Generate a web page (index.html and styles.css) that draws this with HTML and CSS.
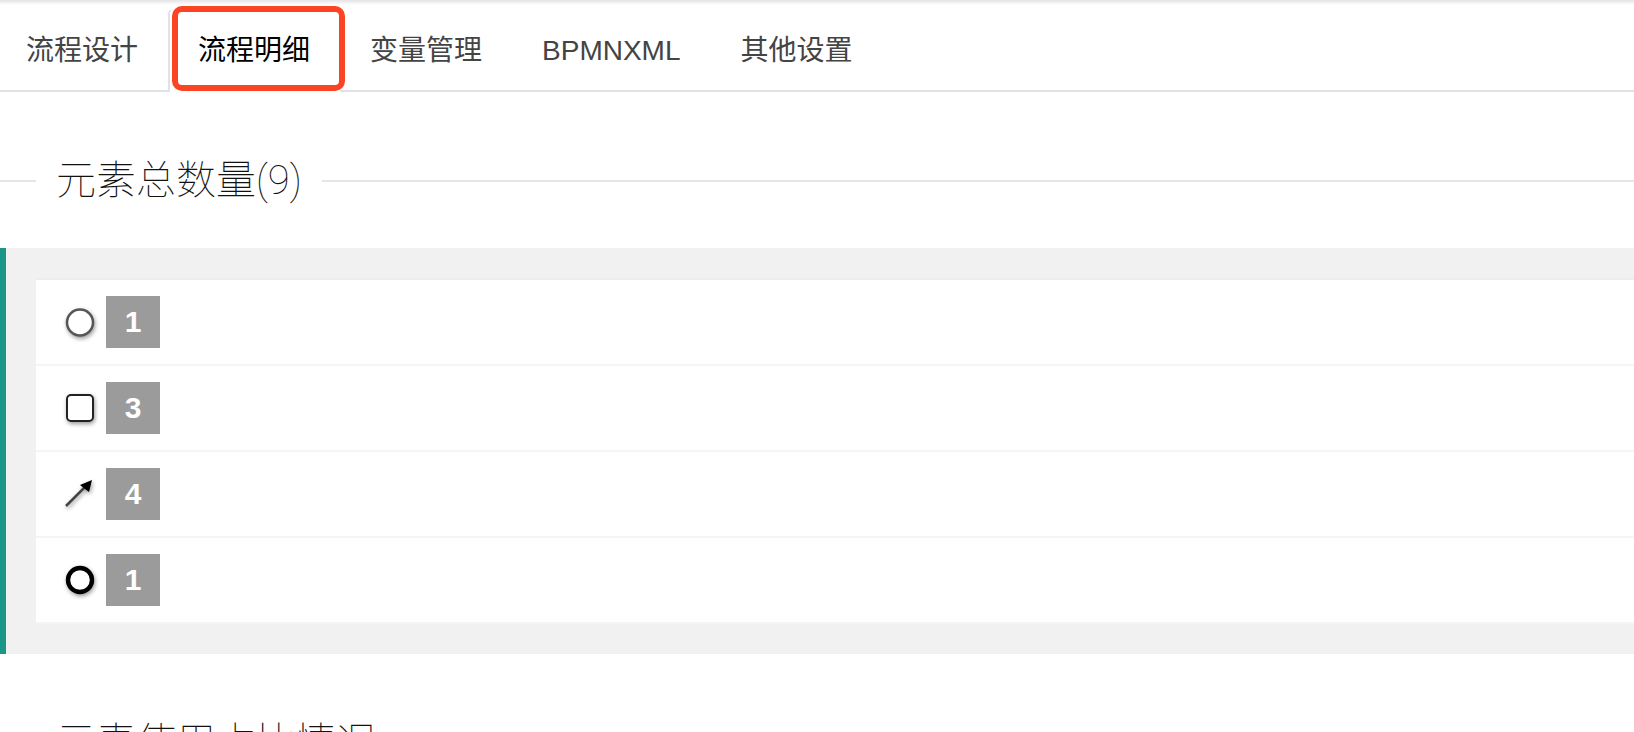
FILE: index.html
```html
<!DOCTYPE html>
<html lang="zh-CN">
<head>
  <meta charset="UTF-8" />
  <meta name="viewport" content="width=device-width, initial-scale=1.0"/>
  <title>流程明细</title>
  <link rel="stylesheet" href="styles.css">
</head>
<body>
  <nav class="tab-title">
    <a href="#design">流程设计</a>
    <a href="#detail" class="tab-this">流程明细</a>
    <a href="#variable">变量管理</a>
    <a href="#xml">BPMNXML</a>
    <a href="#setting">其他设置</a>
  </nav>

  <main>
    <h2 class="field-title"><span>元素总数量(9)</span></h2>

    <div class="quote">
      <ul class="element-list">
        <li>
          <svg class="icon" viewBox="0 0 32 32">
            <circle cx="14" cy="14.5" r="13" fill="#fff" stroke="#555" stroke-width="2.5"/>
          </svg>
          <span class="badge">1</span>
        </li>
        <li>
          <svg class="icon" viewBox="0 0 32 32">
            <rect x="1" y="1" width="26" height="26" rx="4" fill="#fff" stroke="#222" stroke-width="2"/>
          </svg>
          <span class="badge">3</span>
        </li>
        <li>
          <svg class="icon" viewBox="0 0 32 32">
            <path d="M0 26 L19 7" fill="none" stroke="#444" stroke-width="2.5"/>
            <path d="M26 0 L23 12 L19 9 L14 5 Z" fill="#000"/>
          </svg>
          <span class="badge">4</span>
        </li>
        <li>
          <svg class="icon" viewBox="0 0 32 32">
            <circle cx="14" cy="14" r="12" fill="#fff" stroke="#000" stroke-width="4.4"/>
          </svg>
          <span class="badge">1</span>
        </li>
      </ul>
    </div>

    <h2 class="field-title"><span>元素使用占比情况</span></h2>
  </main>
</body>
</html>
```
FILE: styles.css
```css
* { box-sizing: border-box; }
body {
  margin: 0;
  background: #fff;
  color: #333;
  font-family: "Liberation Sans", "Noto Sans CJK SC", sans-serif;
  font-size: 28px;
}

/* tabs */
.tab-title {
  display: flex;
  height: 92px;
  padding-top: 10px;
  margin-left: -4px;
  border-bottom: 2px solid #e2e2e2;
  background: linear-gradient(#e4e4e4, #fff 5px);
}
.tab-title a {
  padding: 0 30px;
  line-height: 82px;
  color: #444;
  text-decoration: none;
  white-space: nowrap;
}
.tab-title .tab-this {
  position: relative;
  height: 82px;
  color: #000;
  background: #fff;
  box-shadow: inset 2px 0 #e2e2e2;
  border-radius: 4px 4px 0 0;
}
.tab-this::after {
  content: "";
  position: absolute;
  top: -4px;
  right: -5px;
  bottom: 1px;
  left: 4px;
  border: 6px solid #fb4424;
  border-radius: 10px;
}

/* section title with a line through it */
.field-title {
  display: flex;
  align-items: center;
  margin: 60px 0 38px;
  color: #111;
  font-family: Roboto, "Noto Sans CJK SC", sans-serif;
  font-size: 40px;
  font-weight: 100;
  line-height: 58px;
}
.field-title::before,
.field-title::after {
  content: "";
  height: 2px;
  background: #e6e6e6;
}
.field-title::before { width: 36px; }
.field-title::after { flex: 1; }
.field-title span { padding: 0 20px; }

/* element counts */
.quote {
  padding: 30px 0 30px 30px;
  border-left: 6px solid #1a9688;
  background: #f1f1f1;
}
.element-list {
  margin: 0;
  padding: 0;
  list-style: none;
  border-top: 2px solid #ededed;
  background: #fff;
}
.element-list li {
  display: flex;
  align-items: center;
  gap: 8px;
  padding: 16px 30px;
  border-bottom: 2px solid #f5f5f5;
}
.icon {
  width: 32px;
  height: 32px;
  margin-top: 4px;
  overflow: visible;
  filter: drop-shadow(1px 2px 2px rgba(0, 0, 0, 0.4));
}
.badge {
  width: 54px;
  background: #9b9b9b;
  color: #fff;
  font-size: 30px;
  font-weight: bold;
  line-height: 52px;
  text-align: center;
}
```
